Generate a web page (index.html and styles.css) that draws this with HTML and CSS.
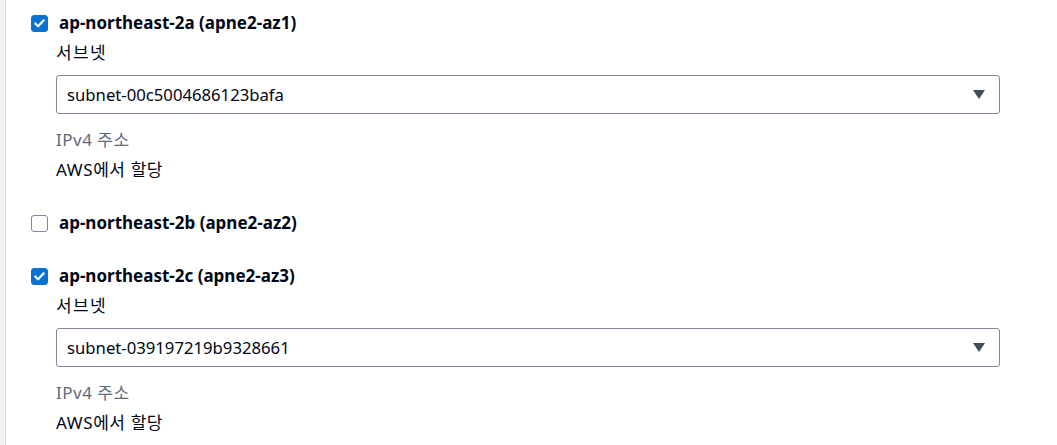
FILE: index.html
```html
<!DOCTYPE html>
<html lang="ko">
<head>
  <meta charset="UTF-8" />
  <title>가용 영역</title>
  <link rel="stylesheet" href="styles.css">
</head>
<body>
  <div class="panel">
    <div class="zone">
      <label class="zone-head">
        <span class="check is-on">
          <svg viewBox="0 0 16 16" width="16" height="16"><path d="M3.5 8.5l3 3 6-6.5" /></svg>
        </span>
        <span class="zone-name">ap-northeast-2a (apne2-az1)</span>
      </label>
      <div class="zone-body">
        <div class="field-label">서브넷</div>
        <div class="select">
          <span class="select-value">subnet-00c5004686123bafa</span>
          <span class="caret"></span>
        </div>
        <div class="meta-label">IPv4 주소</div>
        <div class="meta-value">AWS에서 할당</div>
      </div>
    </div>

    <div class="zone">
      <label class="zone-head">
        <span class="check"></span>
        <span class="zone-name">ap-northeast-2b (apne2-az2)</span>
      </label>
    </div>

    <div class="zone">
      <label class="zone-head">
        <span class="check is-on">
          <svg viewBox="0 0 16 16" width="16" height="16"><path d="M3.5 8.5l3 3 6-6.5" /></svg>
        </span>
        <span class="zone-name">ap-northeast-2c (apne2-az3)</span>
      </label>
      <div class="zone-body">
        <div class="field-label">서브넷</div>
        <div class="select">
          <span class="select-value">subnet-039197219b9328661</span>
          <span class="caret"></span>
        </div>
        <div class="meta-label">IPv4 주소</div>
        <div class="meta-value">AWS에서 할당</div>
      </div>
    </div>
  </div>
</body>
</html>
```

FILE: styles.css
```css
* {
  margin: 0;
  padding: 0;
  box-sizing: border-box;
}
body {
  font-family: 'Noto Sans', 'Noto Sans CJK KR', sans-serif;
  background: #f2f3f3;
  color: #000716;
  font-size: 17px;
  line-height: 22px;
  padding-left: 5px;
}
.panel {
  background: #fff;
  border-left: 1px solid #d5dbdb;
  min-height: 445px;
  padding: 12px 0 0 25px;
  display: flex;
  flex-direction: column;
  gap: 31px;
}
.zone-head {
  display: flex;
  align-items: center;
  gap: 11px;
  height: 22px;
}
.check {
  width: 17px;
  height: 17px;
  border: 1.5px solid #7d8998;
  border-radius: 3px;
  background: #fff;
  display: flex;
  align-items: center;
  justify-content: center;
}
.check.is-on {
  border-color: #0972d3;
  background: #0972d3;
}
.check svg {
  fill: none;
  stroke: #fff;
  stroke-width: 2.2;
  stroke-linecap: round;
  stroke-linejoin: round;
}
.zone-name {
  font-weight: 700;
}
.zone-body {
  padding-left: 25px;
  padding-top: 8px;
  display: flex;
  flex-direction: column;
}
.field-label {
  letter-spacing: 1.3px;
}
.select {
  margin-top: 11px;
  width: 944px;
  height: 39px;
  border: 1px solid #7d8998;
  border-radius: 3px;
  display: flex;
  align-items: center;
  justify-content: space-between;
  padding: 0 14px 0 10px;
}
.select-value {
  font-size: 16.7px;
}
.caret {
  width: 0;
  height: 0;
  border-left: 6px solid transparent;
  border-right: 6px solid transparent;
  border-top: 9px solid #414d5c;
}
.meta-label {
  margin-top: 15px;
  color: #5f6b7a;
  letter-spacing: 0.5px;
}
.meta-value {
  margin-top: 8px;
  letter-spacing: 0.6px;
}
```
